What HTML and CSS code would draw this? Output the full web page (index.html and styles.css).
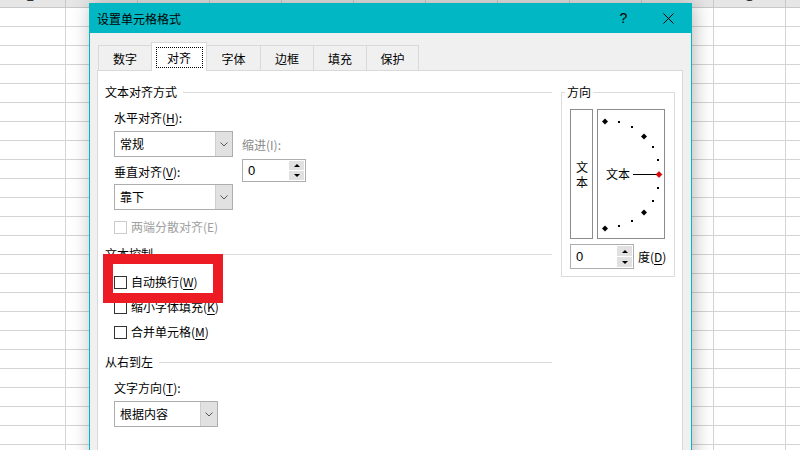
FILE: index.html
```html
<!DOCTYPE html>
<html lang="zh-CN">

<head>
    <meta charset="UTF-8">
    <meta name="viewport" content="width=device-width, initial-scale=1.0">
    <title>设置单元格格式</title>
    <link rel="stylesheet" href="styles.css">
</head>

<body>
    <section class="sheet">
        <div class="sheet-head">
            <span class="head-l">L</span>
            <span class="head-o">O</span>
        </div>
        <div class="sheet-rows"></div>
    </section>

    <section class="dialog">
        <div class="titlebar">
            <div class="title">设置单元格格式</div>
            <div class="title-btn">?</div>
            <div class="title-btn">
                <svg width="11" height="11" viewBox="0 0 11 11">
                    <path d="M0.5 0.5 L10.5 10.5 M10.5 0.5 L0.5 10.5" stroke="#000" stroke-width="1" fill="none" />
                </svg>
            </div>
        </div>

        <div class="tabs">
            <div class="tab">数字</div>
            <div class="tab tab-active"><span class="focus">对齐</span></div>
            <div class="tab">字体</div>
            <div class="tab">边框</div>
            <div class="tab">填充</div>
            <div class="tab">保护</div>
        </div>

        <div class="panel">
            <div class="col-left">
                <div class="group-title">文本对齐方式</div>
                <div class="indent">
                    <div class="label label-first">水平对齐(<u>H</u>):</div>
                    <div class="align-row">
                        <div class="align-left">
                            <div class="combo">
                                <div class="combo-value">常规</div>
                                <div class="combo-arrow">
                                    <svg width="8" height="5" viewBox="0 0 8 5">
                                        <path d="M0.5 0.5 L4 4 L7.5 0.5" stroke="#555" fill="none" />
                                    </svg>
                                </div>
                            </div>
                            <div class="label label-v">垂直对齐(<u>V</u>):</div>
                            <div class="combo combo-v">
                                <div class="combo-value">靠下</div>
                                <div class="combo-arrow">
                                    <svg width="8" height="5" viewBox="0 0 8 5">
                                        <path d="M0.5 0.5 L4 4 L7.5 0.5" stroke="#555" fill="none" />
                                    </svg>
                                </div>
                            </div>
                        </div>
                        <div class="align-right">
                            <div class="label label-gray">缩进(I):</div>
                            <div class="spin spin-indent">
                                <div class="spin-value">0</div>
                                <div class="spin-btns">
                                    <div class="spin-btn"><span class="tri-up"></span></div>
                                    <div class="spin-btn"><span class="tri-down"></span></div>
                                </div>
                            </div>
                        </div>
                    </div>
                    <div class="check check-off check-spread">
                        <span class="box"></span><span>两端分散对齐(E)</span>
                    </div>
                </div>

                <div class="group-title group-control">文本控制</div>
                <div class="indent checks">
                    <div class="check"><span class="box"></span><span>自动换行(<u>W</u>)</span></div>
                    <div class="check"><span class="box"></span><span>缩小字体填充(<u>K</u>)</span></div>
                    <div class="check"><span class="box"></span><span>合并单元格(<u>M</u>)</span></div>
                </div>

                <div class="group-title group-rtl">从右到左</div>
                <div class="indent">
                    <div class="label label-first">文字方向(<u>T</u>):</div>
                    <div class="combo combo-dir">
                        <div class="combo-value">根据内容</div>
                        <div class="combo-arrow">
                            <svg width="8" height="5" viewBox="0 0 8 5">
                                <path d="M0.5 0.5 L4 4 L7.5 0.5" stroke="#555" fill="none" />
                            </svg>
                        </div>
                    </div>
                </div>
            </div>

            <div class="col-right">
                <div class="orient">
                    <div class="orient-title">方向</div>
                    <div class="orient-boxes">
                        <div class="vert-text">
                            <span class="vert-label">文本</span>
                        </div>
                        <div class="dial">
                            <svg width="66" height="128" viewBox="0 0 66 128">
                                <g fill="#000">
                                    <path d="M7 8.5 L10 11.5 L7 14.5 L4 11.5 Z" />
                                    <rect x="20" y="11" width="2" height="2" />
                                    <rect x="33" y="16" width="2" height="2" />
                                    <path d="M46 23.5 L49 26.5 L46 29.5 L43 26.5 Z" />
                                    <rect x="54" y="36" width="2" height="2" />
                                    <rect x="59" y="49" width="2" height="2" />
                                    <rect x="59" y="77" width="2" height="2" />
                                    <rect x="54" y="90" width="2" height="2" />
                                    <path d="M46 99.5 L49 102.5 L46 105.5 L43 102.5 Z" />
                                    <rect x="33" y="110" width="2" height="2" />
                                    <rect x="20" y="115" width="2" height="2" />
                                    <path d="M7 115.5 L10 118.5 L7 121.5 L4 118.5 Z" />
                                </g>
                                <line x1="35" y1="64.5" x2="59" y2="64.5" stroke="#000" stroke-width="1" />
                                <path d="M61 61.5 L64 64.5 L61 67.5 L58 64.5 Z" fill="#e00" stroke="#600" stroke-width="0.5" />
                                <text x="8" y="69" class="dial-text">文本</text>
                            </svg>
                        </div>
                    </div>
                    <div class="degree-row">
                        <div class="spin spin-degree">
                            <div class="spin-value">0</div>
                            <div class="spin-btns">
                                <div class="spin-btn"><span class="tri-up"></span></div>
                                <div class="spin-btn"><span class="tri-down"></span></div>
                            </div>
                        </div>
                        <div class="degree-label">度(<u>D</u>)</div>
                    </div>
                </div>
            </div>
        </div>

        <div class="highlight"></div>
    </section>
</body>

</html>
```

FILE: styles.css
```css
* {
    box-sizing: border-box;
}

body {
    margin: 0;
    width: 800px;
    height: 450px;
    overflow: hidden;
    position: relative;
    background: #fff;
    font-family: "Noto Sans CJK SC", "Liberation Sans", sans-serif;
    font-size: 12px;
    color: #000;
}

u {
    text-decoration: underline;
    text-underline-offset: 2px;
}

/* background spreadsheet */
.sheet {
    width: 800px;
    height: 450px;
    display: flex;
    flex-direction: column;
}

.sheet-head {
    height: 8px;
    background: #e6e6e6;
    border-bottom: 1px solid #c8c8c8;
    position: relative;
    overflow: hidden;
    background-image: repeating-linear-gradient(to right, transparent 0 65px, #c8c8c8 65px 66px, transparent 66px 72px);
}

.head-l,
.head-o {
    position: absolute;
    top: -12px;
    font-family: "Liberation Sans", sans-serif;
    font-size: 14px;
    line-height: 16px;
    color: #333;
}

.head-l {
    left: 26px;
}

.head-o {
    left: 744px;
}

.sheet-rows {
    flex: 1;
    background-image:
        repeating-linear-gradient(to bottom, transparent 0 18px, #d4d4d4 18px 19px),
        repeating-linear-gradient(to right, transparent 0 65px, #d4d4d4 65px 66px, transparent 66px 72px);
}

/* dialog window */
.dialog {
    position: absolute;
    left: 89px;
    top: 3px;
    width: 603px;
    height: 470px;
    background: #f0f0f0;
    border: 1px solid #00b7c3;
    border-top: none;
    box-shadow: 2px 0 18px rgba(0, 0, 0, 0.28);
}

.titlebar {
    height: 30px;
    background: #00b7c3;
    display: flex;
    align-items: center;
}

.title {
    flex: 1;
    padding-left: 7px;
}

.title-btn {
    width: 45px;
    height: 30px;
    display: flex;
    justify-content: center;
    align-items: center;
    font-family: "Liberation Sans", sans-serif;
    font-size: 14px;
}

.tabs {
    display: flex;
    align-items: flex-end;
    height: 37px;
    padding-left: 8px;
}

.tab {
    width: 53px;
    height: 25px;
    display: flex;
    justify-content: center;
    align-items: center;
    border: 1px solid #d9d9d9;
    border-right: none;
    border-bottom: none;
    background: #f0f0f0;
}

.tab:last-child {
    border-right: 1px solid #d9d9d9;
}

.tab-active {
    width: 56px;
    height: 29px;
    margin-bottom: -1px;
    background: #fff;
    border-right: 1px solid #d9d9d9;
    position: relative;
    z-index: 1;
}

.tab-active + .tab {
    border-left: none;
}

.focus {
    width: 47px;
    height: 21px;
    display: flex;
    justify-content: center;
    align-items: center;
    border: 1px dotted #000;
}

.panel {
    margin: 0 8px 0 7px;
    height: 400px;
    background: #fff;
    border: 1px solid #d9d9d9;
    padding: 13px 7px 0 7px;
    display: flex;
    gap: 9px;
}

.col-left {
    width: 447px;
}

.col-right {
    width: 114px;
}

.group-title {
    height: 16px;
    line-height: 16px;
    display: flex;
    align-items: center;
    gap: 6px;
}

.group-title::after {
    content: "";
    flex: 1;
    border-top: 1px solid #dcdcdc;
}

.group-control {
    margin-top: 11px;
}

.group-rtl {
    margin-top: 14px;
}

.indent {
    padding-left: 9px;
}

.label {
    height: 16px;
    line-height: 16px;
}

.label-first {
    margin-top: 10px;
}

.label-gray {
    color: #8a8a8a;
}

.align-row {
    display: flex;
    gap: 9px;
    margin-top: 5px;
}

.align-left {
    width: 119px;
}

.align-right {
    padding-top: 6px;
}

.label-v {
    margin-top: 7px;
}

.combo {
    height: 26px;
    display: flex;
    border: 1px solid #adadad;
    background: #fff;
}

.combo-v {
    margin-top: 4px;
}

.combo-dir {
    width: 104px;
    margin-top: 5px;
}

.combo-value {
    flex: 1;
    padding-left: 5px;
    line-height: 24px;
}

.combo-arrow {
    width: 17px;
    background: #e1e1e1;
    border-left: 1px solid #cfcfcf;
    display: flex;
    justify-content: center;
    align-items: center;
}

.spin {
    height: 23px;
    display: flex;
    border: 1px solid #adadad;
    background: #fff;
}

.spin-indent {
    width: 64px;
    margin-top: 6px;
}

.spin-degree {
    width: 64px;
    height: 25px;
    flex-shrink: 0;
}

.spin-value {
    flex: 1;
    padding-left: 5px;
    display: flex;
    align-items: center;
    font-family: "Liberation Sans", sans-serif;
    font-size: 13px;
}

.spin-btns {
    width: 15px;
    margin: 1px 1px 1px 0;
    display: flex;
    flex-direction: column;
    gap: 1px;
}

.spin-btn {
    flex: 1;
    background: #e1e1e1;
    display: flex;
    justify-content: center;
    align-items: center;
}

.tri-up {
    border-left: 3px solid transparent;
    border-right: 3px solid transparent;
    border-bottom: 3px solid #000;
}

.tri-down {
    border-left: 3px solid transparent;
    border-right: 3px solid transparent;
    border-top: 3px solid #000;
}

.check {
    height: 16px;
    line-height: 16px;
    display: flex;
    align-items: center;
    gap: 4px;
}

.box {
    width: 13px;
    height: 13px;
    border: 1px solid #333;
    background: #fff;
}

.check-off {
    color: #a0a0a0;
}

.check-off .box {
    border-color: #cccccc;
}

.check-spread {
    margin-top: 9px;
}

.checks {
    margin-top: 12px;
    display: flex;
    flex-direction: column;
    gap: 9px;
}

/* orientation box */
.orient {
    margin-top: 8px;
    height: 185px;
    border: 1px solid #dcdcdc;
    padding: 0 8px;
    display: flex;
    flex-direction: column;
}

.orient-title {
    align-self: flex-start;
    margin: -9px 0 0 -5px;
    padding: 0 2px;
    height: 16px;
    line-height: 16px;
    background: #fff;
}

.orient-boxes {
    display: flex;
    gap: 4px;
    margin-top: 9px;
}

.vert-text {
    width: 23px;
    height: 130px;
    border: 1px solid #8c8c8c;
    display: flex;
    justify-content: center;
    align-items: center;
    padding-top: 4px;
}

.vert-label {
    writing-mode: vertical-rl;
    letter-spacing: 3px;
    line-height: 16px;
}

.dial {
    width: 68px;
    height: 130px;
    border: 1px solid #8c8c8c;
}

.dial svg {
    display: block;
}

.dial-text {
    font-family: "Noto Sans CJK SC", sans-serif;
    font-size: 12px;
}

.degree-row {
    display: flex;
    align-items: center;
    gap: 4px;
    margin: 5px -8px 0 0;
}

.degree-label {
    white-space: nowrap;
}

.highlight {
    position: absolute;
    left: 13px;
    top: 251px;
    width: 120px;
    height: 49px;
    border: 10px solid #ed1c24;
}
```
